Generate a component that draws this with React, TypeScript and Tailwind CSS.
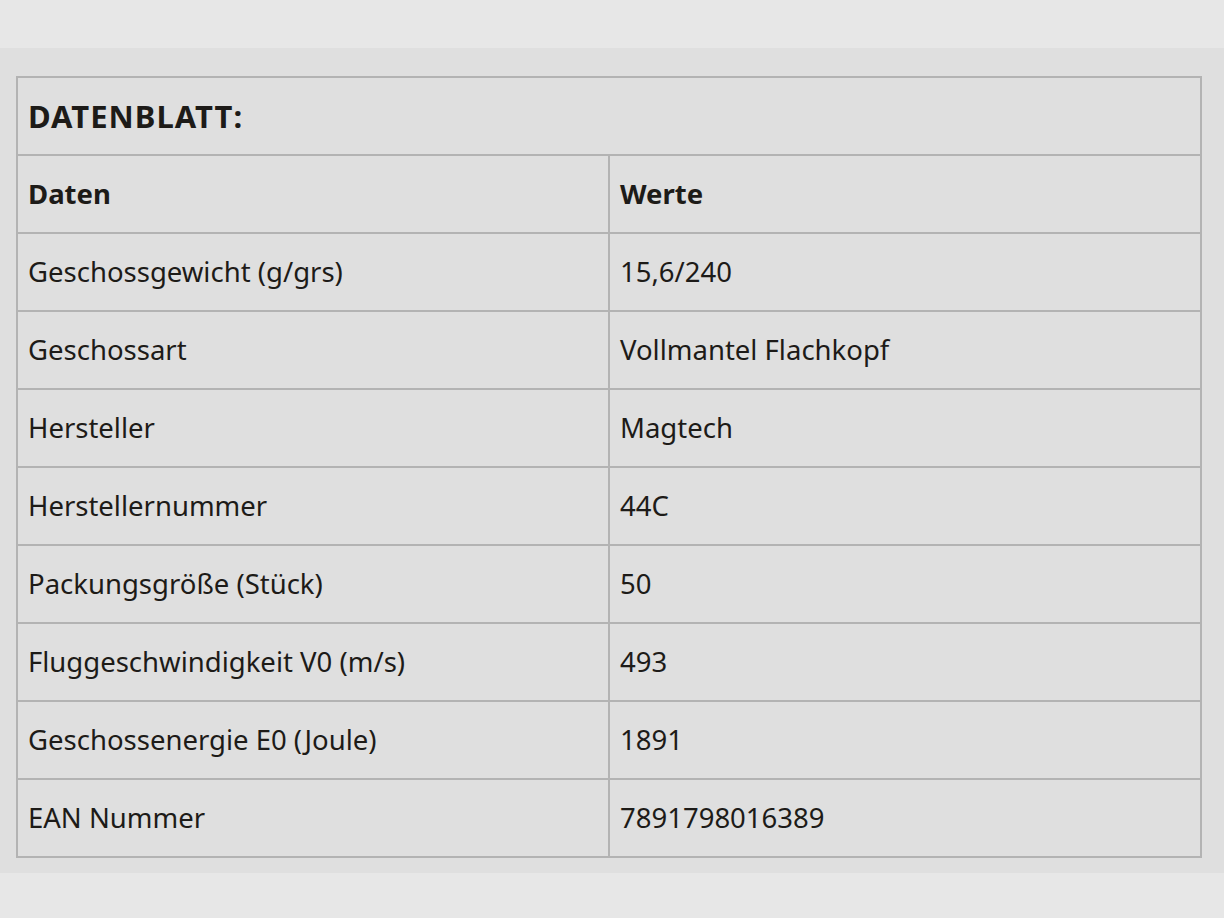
import React from 'react';

const rows: [string, string][] = [
  ['Geschossgewicht (g/grs)', '15,6/240'],
  ['Geschossart', 'Vollmantel Flachkopf'],
  ['Hersteller', 'Magtech'],
  ['Herstellernummer', '44C'],
  ['Packungsgröße (Stück)', '50'],
  ['Fluggeschwindigkeit V0 (m/s)', '493'],
  ['Geschossenergie E0 (Joule)', '1891'],
  ['EAN Nummer', '7891798016389'],
];

export default function App() {
  return (
    <div className="min-h-[918px] bg-[#e7e7e7] pt-12" style={{ fontFamily: '"Noto Sans", "Open Sans", sans-serif' }}>
      <div className="bg-[#dfdfdf] pl-4 pr-[22px] pt-7 pb-[15px]">
        <table className="w-full border-collapse border-2 border-[#b3b3b3] text-[#1d1b18] text-[27.5px]">
          <tbody>
            <tr>
              <th colSpan={2} className="h-[78px] border-2 border-[#b3b3b3] px-[10px] text-left font-bold text-[31px] tracking-[1px]">
                DATENBLATT:
              </th>
            </tr>
            <tr>
              <th className="h-[78px] w-1/2 border-2 border-[#b3b3b3] px-[10px] text-left font-bold">Daten</th>
              <th className="h-[78px] w-1/2 border-2 border-[#b3b3b3] px-[10px] text-left font-bold">Werte</th>
            </tr>
            {rows.map(([k, v]) => (
              <tr key={k}>
                <td className="h-[78px] border-2 border-[#b3b3b3] px-[10px]">{k}</td>
                <td className="h-[78px] border-2 border-[#b3b3b3] px-[10px]">{v}</td>
              </tr>
            ))}
          </tbody>
        </table>
      </div>
    </div>
  );
}
